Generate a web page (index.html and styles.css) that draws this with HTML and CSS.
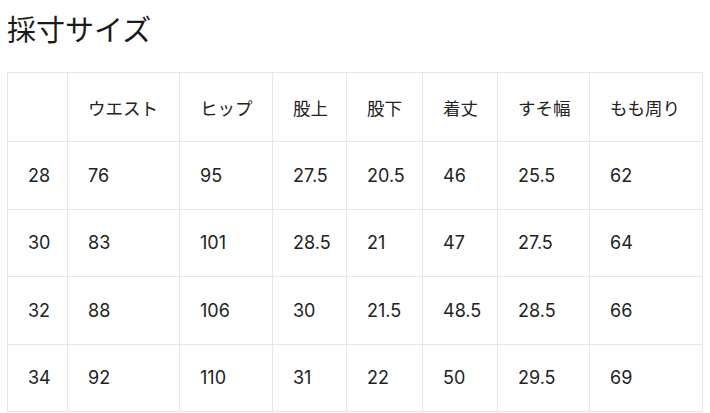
FILE: index.html
```html
<!DOCTYPE html>
<html lang="ja">
<head>
<meta charset="utf-8">
<link rel="stylesheet" href="styles.css">
</head>
<body>
<h1 class="title">採寸サイズ</h1>
<table class="size-table">
<colgroup>
<col class="c1"><col class="c2"><col class="c3"><col class="c4"><col class="c5"><col class="c6"><col class="c7"><col class="c8">
</colgroup>
<thead>
<tr class="head"><th></th><th>ウエスト</th><th>ヒップ</th><th>股上</th><th>股下</th><th>着丈</th><th>すそ幅</th><th>もも周り</th></tr>
</thead>
<tbody>
<tr><td>28</td><td>76</td><td>95</td><td>27.5</td><td>20.5</td><td>46</td><td>25.5</td><td>62</td></tr>
<tr><td>30</td><td>83</td><td>101</td><td>28.5</td><td>21</td><td>47</td><td>27.5</td><td>64</td></tr>
<tr><td>32</td><td>88</td><td>106</td><td>30</td><td>21.5</td><td>48.5</td><td>28.5</td><td>66</td></tr>
<tr><td>34</td><td>92</td><td>110</td><td>31</td><td>22</td><td>50</td><td>29.5</td><td>69</td></tr>
</tbody>
</table>
</body>
</html>
```
FILE: styles.css
```css
html, body {
  margin: 0;
  padding: 0;
  background: #fff;
}
body {
  font-family: "Inter", "Noto Sans CJK JP", sans-serif;
  color: #222;
}
.title {
  margin: 0;
  padding: 10px 0 0 7px;
  height: 72px;
  box-sizing: border-box;
  font-family: "Noto Sans CJK JP", sans-serif;
  font-weight: 400;
  font-size: 29px;
  line-height: 36px;
  color: #1a1a1a;
}
.size-table {
  margin-left: 7px;
  border-collapse: collapse;
  table-layout: fixed;
  width: 695px;
}
.c1 { width: 60px; }
.c2 { width: 112px; }
.c3 { width: 93px; }
.c4 { width: 74px; }
.c5 { width: 76px; }
.c6 { width: 75px; }
.c7 { width: 92px; }
.c8 { width: 113px; }
.size-table th,
.size-table td {
  border: 1px solid #e6e6e6;
  padding: 0 0 0 20px;
  text-align: left;
  vertical-align: middle;
  font-weight: 400;
  white-space: nowrap;
}
.size-table th {
  height: 68px;
  font-family: "Noto Sans CJK JP", sans-serif;
  font-size: 17.5px;
}
.size-table td {
  height: 66.5px;
  font-size: 18px;
}
```
